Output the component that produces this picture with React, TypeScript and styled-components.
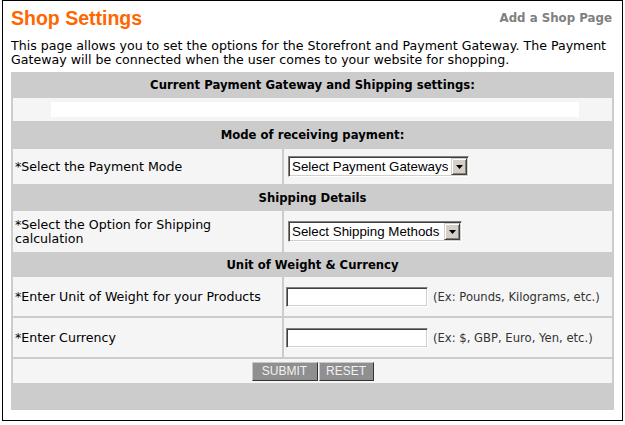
import React from "react";
import styled, { createGlobalStyle } from "styled-components";

const Global = createGlobalStyle`
  html, body { margin: 0; padding: 0; background: #fff; }
  body { font-family: "DejaVu Sans", Verdana, sans-serif; color: #000; }
`;

const Page = styled.div`
  box-sizing: border-box;
  margin-left: 2px;
  width: 621px;
  height: 421px;
  border: 1px solid #000;
  padding: 0 7px 0 8px;
`;

const TitleBar = styled.div`
  display: flex;
  justify-content: space-between;
  align-items: flex-start;
  width: 603px;
`;

const Title = styled.h1`
  margin: 5px 0 0 0;
  font-family: "Liberation Sans", Arial, sans-serif;
  font-weight: bold;
  font-size: 19.5px;
  line-height: 24px;
  color: #ff6600;
`;

const TopLink = styled.a`
  margin: 11px 2px 0 0;
  font-size: 11.8px;
  line-height: 13px;
  font-weight: bold;
  color: #808080;
  text-decoration: none;
  cursor: pointer;
`;

const Intro = styled.p`
  margin: 9px 0 5px 0;
  width: 603px;
  font-size: 12.6px;
  line-height: 14px;
`;

const Table = styled.table`
  width: 603px;
  border-spacing: 2px;
  background: #cccccc;
  font-size: 12.6px;
`;

const HeadCell = styled.th<{ $h: number }>`
  height: ${(p) => p.$h}px;
  padding: 0;
  text-align: center;
  vertical-align: middle;
  font-weight: bold;
  font-size: 11.65px;
`;

const LightCell = styled.td<{ $h: number }>`
  height: ${(p) => p.$h}px;
  padding: 0;
  background: #f5f5f5;
  vertical-align: middle;
`;

const LabelCell = styled.td<{ $h: number }>`
  width: 265px;
  height: ${(p) => p.$h}px;
  padding: 0 2px;
  background: #f5f5f5;
  vertical-align: middle;
  line-height: 14px;
`;

const FieldCell = styled.td`
  padding: 0 2px;
  background: #f5f5f5;
  vertical-align: middle;
  white-space: nowrap;
`;

const BlankCell = styled.td<{ $h: number }>`
  height: ${(p) => p.$h}px;
  padding: 0;
`;

const StatusBar = styled.div`
  width: 528px;
  height: 15px;
  margin-left: 38px;
  background: #fff;
`;

const SelectWrap = styled.span`
  position: relative;
  display: inline-block;
  margin-left: 2px;
  vertical-align: middle;
`;

const NativeSelect = styled.select<{ $w: number }>`
  appearance: none;
  -webkit-appearance: none;
  box-sizing: border-box;
  display: block;
  width: ${(p) => p.$w}px;
  height: 21px;
  margin: 0;
  padding: 0 20px 0 3px;
  font-family: "Liberation Sans", Arial, sans-serif;
  font-size: 13.33px;
  color: #000;
  background: #fff;
  border: 1px solid;
  border-color: #808080 #ffffff #ffffff #808080;
  box-shadow: inset 1px 1px 0 #404040, inset -1px -1px 0 #d4d0c8;
  border-radius: 0;
  outline: none;
`;

const ArrowButton = styled.span`
  position: absolute;
  top: 2px;
  right: 2px;
  bottom: 2px;
  width: 16px;
  box-sizing: border-box;
  background: #d4d0c8;
  border: 1px solid;
  border-color: #d4d0c8 #404040 #404040 #d4d0c8;
  box-shadow: inset 1px 1px 0 #fff, inset -1px -1px 0 #808080;
  display: flex;
  align-items: center;
  justify-content: center;
  pointer-events: none;
`;

const TextInput = styled.input`
  box-sizing: border-box;
  width: 142px;
  height: 20px;
  margin: 0;
  padding: 0 2px;
  vertical-align: middle;
  font-family: "Liberation Sans", Arial, sans-serif;
  font-size: 13.33px;
  background: #fff;
  border: 1px solid;
  border-color: #808080 #ffffff #ffffff #808080;
  box-shadow: inset 1px 1px 0 #404040, inset -1px -1px 0 #d4d0c8;
  outline: none;
`;

const Hint = styled.span`
  margin-left: 5px;
  font-size: 11.6px;
  color: #333;
  vertical-align: middle;
`;

const ButtonRow = styled.div`
  display: flex;
  justify-content: center;
  gap: 1px;
`;

const FormButton = styled.button<{ $w: number }>`
  box-sizing: border-box;
  width: ${(p) => p.$w}px;
  height: 19px;
  margin: 0;
  padding: 0;
  font-family: "Liberation Sans", Arial, sans-serif;
  font-size: 12px;
  color: #f2f2f2;
  background: #8f8f8f;
  border: 1px solid;
  border-color: #c8c8c8 #333333 #333333 #c8c8c8;
  cursor: pointer;
`;

const Arrow = () => (
  <svg width="7" height="4" viewBox="0 0 7 4">
    <path d="M0 0H7L3.5 4Z" fill="#000" />
  </svg>
);

const Dropdown = ({ width, label }: { width: number; label: string }) => (
  <SelectWrap>
    <NativeSelect $w={width} defaultValue="">
      <option value="">{label}</option>
    </NativeSelect>
    <ArrowButton>
      <Arrow />
    </ArrowButton>
  </SelectWrap>
);

export default function App() {
  return (
    <>
      <Global />
      <Page>
        <TitleBar>
          <Title>Shop Settings</Title>
          <TopLink>Add a Shop Page</TopLink>
        </TitleBar>
        <Intro>
          This page allows you to set the options for the Storefront and Payment Gateway. The Payment
          Gateway will be connected when the user comes to your website for shopping.
        </Intro>
        <Table>
          <tbody>
            <tr>
              <HeadCell $h={22} colSpan={2}>Current Payment Gateway and Shipping settings:</HeadCell>
            </tr>
            <tr>
              <LightCell $h={23} colSpan={2}>
                <StatusBar />
              </LightCell>
            </tr>
            <tr>
              <HeadCell $h={24} colSpan={2}>Mode of receiving payment:</HeadCell>
            </tr>
            <tr>
              <LabelCell $h={35}>*Select the Payment Mode</LabelCell>
              <FieldCell>
                <Dropdown width={181} label="Select Payment Gateways" />
              </FieldCell>
            </tr>
            <tr>
              <HeadCell $h={23} colSpan={2}>Shipping Details</HeadCell>
            </tr>
            <tr>
              <LabelCell $h={41}>*Select the Option for Shipping calculation</LabelCell>
              <FieldCell>
                <Dropdown width={174} label="Select Shipping Methods" />
              </FieldCell>
            </tr>
            <tr>
              <HeadCell $h={21} colSpan={2}>Unit of Weight &amp; Currency</HeadCell>
            </tr>
            <tr>
              <LabelCell $h={39}>*Enter Unit of Weight for your Products</LabelCell>
              <FieldCell>
                <TextInput type="text" />
                <Hint>(Ex: Pounds, Kilograms, etc.)</Hint>
              </FieldCell>
            </tr>
            <tr>
              <LabelCell $h={39}>*Enter Currency</LabelCell>
              <FieldCell>
                <TextInput type="text" />
                <Hint>(Ex: $, GBP, Euro, Yen, etc.)</Hint>
              </FieldCell>
            </tr>
            <tr>
              <LightCell $h={24} colSpan={2}>
                <ButtonRow>
                  <FormButton $w={66} type="button">SUBMIT</FormButton>
                  <FormButton $w={55} type="reset">RESET</FormButton>
                </ButtonRow>
              </LightCell>
            </tr>
            <tr>
              <BlankCell $h={23} colSpan={2} />
            </tr>
          </tbody>
        </Table>
      </Page>
    </>
  );
}
